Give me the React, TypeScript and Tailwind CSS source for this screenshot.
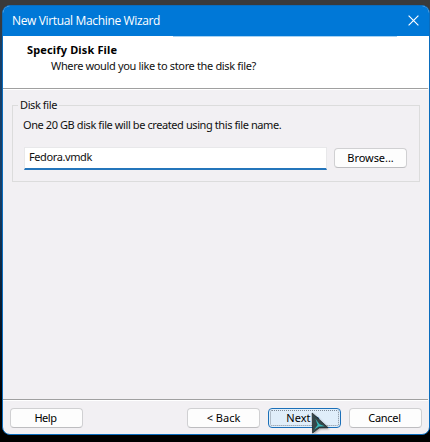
import type { ReactNode } from 'react';

function DialogButton({ children, primary = false, className = '' }: { children: ReactNode; primary?: boolean; className?: string }) {
  return (
    <button
      className={`relative flex h-[20px] w-[73px] shrink-0 items-center justify-center rounded-[4px] border text-black ${
        primary ? 'border-[#1b6fb8] bg-[#e0eefa]' : 'border-[#d0d0d2] border-b-[#bdbdc0] bg-[#fdfdfd]'
      } ${className}`}
    >
      {primary && <span className="absolute inset-px rounded-[2px] border border-dotted border-[#7f8a96]" />}
      {children}
    </button>
  );
}

export default function App() {
  return (
    <div className="h-[442px] w-[430px] overflow-hidden bg-[linear-gradient(to_bottom,#3a3a3a_0px,#3a3a3a_24px,#173f68_50px,#173f68_190px,#061525_330px,#000_400px)] pt-[5px] pl-[2px] font-['Noto_Sans',sans-serif] text-[11px] leading-[14px] text-[#101010]">
      <div className="flex h-[430px] w-[428px] flex-col overflow-hidden rounded-[8px] border border-[#0a6cbd] bg-[#f2f0f3]">
        <div className="flex h-[30px] shrink-0 items-center justify-between bg-[#0078d7] pr-[10px] pl-[9px] text-white">
          <span className="whitespace-nowrap font-['Open_Sans',sans-serif] text-[12px] tracking-[-0.35px]">New Virtual Machine Wizard</span>
          <svg width="11" height="11" viewBox="0 0 11 11" fill="none" stroke="white" strokeWidth="1.15" className="-mt-[2px]">
            <path d="M.6.6 10.4 10.4M10.4.6.6 10.4" />
          </svg>
        </div>
        <div className="h-[52px] shrink-0 bg-white">
          <div className="ml-[170px] h-px w-[224px] bg-[#a6d2f3]" />
          <div className="mt-[6px] pl-[24px] font-bold tracking-[0.15px] text-black">Specify Disk File</div>
          <div className="mt-[2px] pl-[48px] tracking-[-0.35px]">Where would you like to store the disk file?</div>
        </div>
        <div className="mr-px h-[2px] shrink-0 border-t border-[#a0a0a0] bg-white" />
        <div className="flex-1 px-[9px] pt-[8px]">
          <fieldset className="h-[84px] border border-[#dcdcdc] pr-[12px] pl-[11px]">
            <legend className="-ml-[6px] h-[14px] px-[2px] tracking-[-0.4px]">Disk file</legend>
            <div className="-ml-px pt-[6px] tracking-[-0.41px]">One 20 GB disk file will be created using this file name.</div>
            <div className="mt-[15px] flex items-start gap-[7px]">
              <input
                readOnly
                value="Fedora.vmdk"
                className="h-[23px] w-[303px] border border-[#e8e8ea] border-b-2 border-b-[#2475bb] bg-white px-[4px] pb-[3px] tracking-[-0.4px] outline-none"
              />
              <DialogButton className="mt-px tracking-[-0.05px]">Browse...</DialogButton>
            </div>
          </fieldset>
        </div>
        <div className="mr-px h-[2px] shrink-0 border-t border-[#a0a0a0] bg-white" />
        <div className="flex h-[33px] shrink-0 pt-[7px] pl-[7px]">
          <DialogButton className="pr-[2px] tracking-[-0.45px]">Help</DialogButton>
          <DialogButton className="ml-[104px]">&lt; Back</DialogButton>
          <DialogButton primary className="ml-[8px] pr-[3px]">
            Next &gt;
            <svg className="absolute top-[3px] left-[42px] overflow-visible drop-shadow-[1px_1px_1px_#0005]" width="18" height="22" viewBox="0 0 18 22">
              <path d="M1.2 1 17 15.7 8.3 15.8 1.6 21Z" fill="#34474a" stroke="#22292b" strokeWidth=".8" />
              <path d="m4.4 6.8 2.3 6.2-3.7 4.7 4.9-3.3 5.8-.1-5.2-2.1Z" fill="#35babb" />
            </svg>
          </DialogButton>
          <DialogButton className="ml-[8px] pr-[2px] tracking-[-0.3px]">Cancel</DialogButton>
        </div>
      </div>
    </div>
  );
}
